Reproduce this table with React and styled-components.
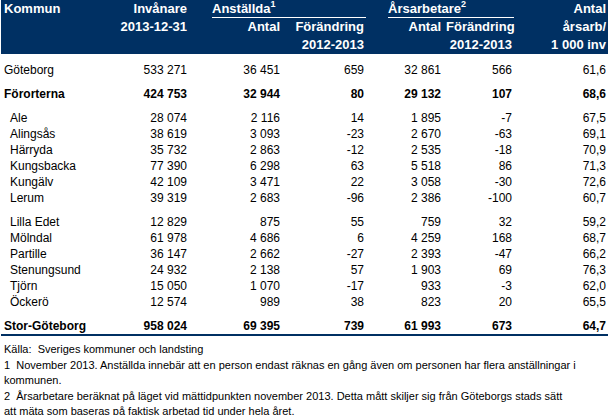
import React from "react";
import styled, { createGlobalStyle } from "styled-components";

const GlobalStyle = createGlobalStyle`
  body {
    margin: 0;
    background: #ffffff;
    font-family: "Liberation Sans", Arial, sans-serif;
  }
`;

const Wrapper = styled.div`
  width: 608px;
  padding-left: 1px;
  box-sizing: border-box;
`;

const Table = styled.table`
  width: 607px;
  border-collapse: collapse;
  table-layout: fixed;
  font-size: 12px;
  color: #000;
`;

const Head = styled.thead`
  background: #003063;
  color: #ffffff;
  font-weight: bold;
  font-size: 13px;
`;

const HeadCell = styled.th`
  height: 18px;
  padding: 0 2px 0 3px;
  font-weight: bold;
  text-align: ${({ $left }) => ($left ? "left" : "right")};
  white-space: nowrap;
  line-height: 18px;
`;

const Group = styled.div`
  margin-left: ${({ $indent }) => $indent}px;
  margin-right: -2px;
  border-bottom: 1px solid #ffffff;
  text-align: left;
  line-height: 17px;
`;

const Sup = styled.sup`
  font-size: 9px;
  vertical-align: 6px;
  line-height: 0;
`;

const Row = styled.tr`
  height: 16px;
  font-weight: ${({ $bold }) => ($bold ? "bold" : "normal")};
`;

const Spacer = styled.tr`
  height: ${({ $h }) => $h}px;
`;

const Cell = styled.td`
  padding: 0 2px 0 ${({ $indent }) => ($indent ? 9 : 3)}px;
  text-align: ${({ $left }) => ($left ? "left" : "right")};
  white-space: nowrap;
  line-height: 16px;
`;

const TotalRow = styled.tr`
  height: 16px;
  font-weight: bold;
  border-bottom: 2px solid #003063;
`;

const Notes = styled.div`
  padding: 6px 0 0 3px;
  font-size: 11px;
  line-height: 15.5px;
  color: #000;
`;

const Note = styled.div`
  white-space: nowrap;
`;

const groups = [
  [["Göteborg", "533 271", "36 451", "659", "32 861", "566", "61,6"]],
  [["Förorterna", "424 753", "32 944", "80", "29 132", "107", "68,6"]],
  [
    ["Ale", "28 074", "2 116", "14", "1 895", "-7", "67,5"],
    ["Alingsås", "38 619", "3 093", "-23", "2 670", "-63", "69,1"],
    ["Härryda", "35 732", "2 863", "-12", "2 535", "-18", "70,9"],
    ["Kungsbacka", "77 390", "6 298", "63", "5 518", "86", "71,3"],
    ["Kungälv", "42 109", "3 471", "22", "3 058", "-30", "72,6"],
    ["Lerum", "39 319", "2 683", "-96", "2 386", "-100", "60,7"],
  ],
  [
    ["Lilla Edet", "12 829", "875", "55", "759", "32", "59,2"],
    ["Mölndal", "61 978", "4 686", "6", "4 259", "168", "68,7"],
    ["Partille", "36 147", "2 662", "-27", "2 393", "-47", "66,2"],
    ["Stenungsund", "24 932", "2 138", "57", "1 903", "69", "76,3"],
    ["Tjörn", "15 050", "1 070", "-17", "933", "-3", "62,0"],
    ["Öckerö", "12 574", "989", "38", "823", "20", "65,5"],
  ],
];

const total = ["Stor-Göteborg", "958 024", "69 395", "739", "61 993", "673", "64,7"];

const widths = [110, 78, 93, 84, 77, 71, 94];

export default function App() {
  return (
    <Wrapper>
      <GlobalStyle />
      <Table>
        <colgroup>
          {widths.map((w, i) => (
            <col key={i} style={{ width: w }} />
          ))}
        </colgroup>
        <Head>
          <tr>
            <HeadCell $left>Kommun</HeadCell>
            <HeadCell>Invånare</HeadCell>
            <HeadCell colSpan={2}>
              <Group $indent={20}>
                Anställda<Sup>1</Sup>
              </Group>
            </HeadCell>
            <HeadCell colSpan={2}>
              <Group $indent={19}>
                Årsarbetare<Sup>2</Sup>
              </Group>
            </HeadCell>
            <HeadCell>Antal</HeadCell>
          </tr>
          <tr>
            <HeadCell />
            <HeadCell>2013-12-31</HeadCell>
            <HeadCell>Antal</HeadCell>
            <HeadCell>Förändring</HeadCell>
            <HeadCell>Antal</HeadCell>
            <HeadCell>Förändring</HeadCell>
            <HeadCell>årsarb/</HeadCell>
          </tr>
          <tr>
            <HeadCell />
            <HeadCell />
            <HeadCell />
            <HeadCell>2012-2013</HeadCell>
            <HeadCell />
            <HeadCell>2012-2013</HeadCell>
            <HeadCell>1 000 inv</HeadCell>
          </tr>
        </Head>
        <tbody>
          <Spacer $h={8} />
          {groups.map((rows, gi) => (
            <React.Fragment key={gi}>
              {gi > 0 && <Spacer $h={8} />}
              {rows.map((r) => (
                <Row key={r[0]} $bold={gi === 1}>
                  {r.map((v, i) => (
                    <Cell key={i} $left={i === 0} $indent={i === 0 && gi > 1}>
                      {v}
                    </Cell>
                  ))}
                </Row>
              ))}
            </React.Fragment>
          ))}
          <Spacer $h={8} />
          <TotalRow>
            {total.map((v, i) => (
              <Cell key={i} $left={i === 0}>
                {v}
              </Cell>
            ))}
          </TotalRow>
        </tbody>
      </Table>
      <Notes>
        <Note>Källa:&nbsp; Sveriges kommuner och landsting</Note>
        <Note>
          1&nbsp; November 2013. Anställda innebär att en person endast räknas en gång även om personen har flera anställningar i
        </Note>
        <Note>kommunen.</Note>
        <Note>
          2&nbsp; Årsarbetare beräknat på läget vid mättidpunkten november 2013. Detta mått skiljer sig från Göteborgs stads sätt
        </Note>
        <Note>att mäta som baseras på faktisk arbetad tid under hela året.</Note>
      </Notes>
    </Wrapper>
  );
}
